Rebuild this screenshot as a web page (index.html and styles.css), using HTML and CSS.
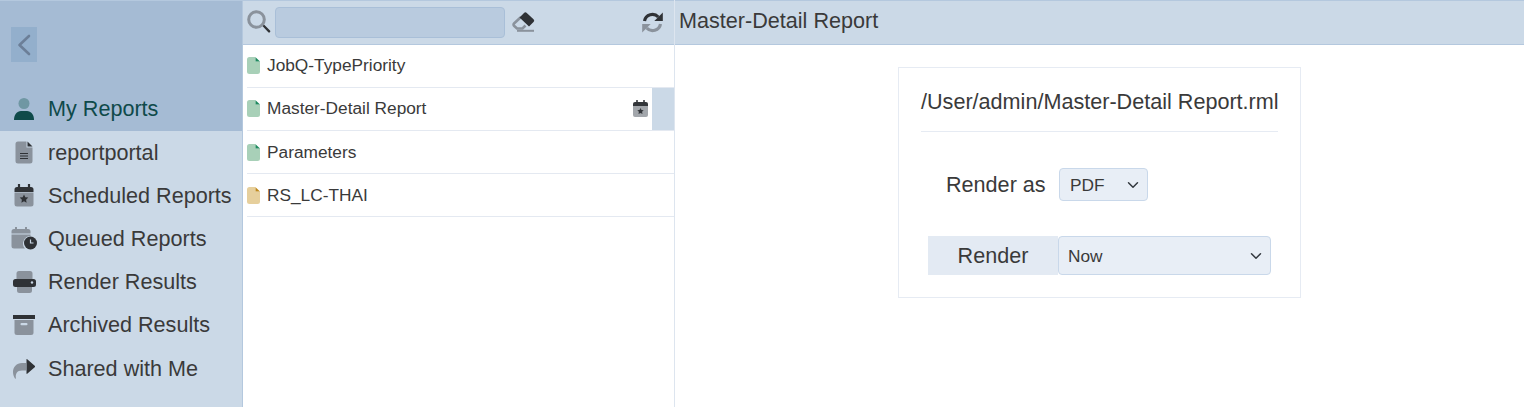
FILE: index.html
```html
<!DOCTYPE html>
<html lang="en">
<head>
<meta charset="utf-8">
<title>Master-Detail Report</title>
<link rel="stylesheet" href="styles.css">
</head>
<body>
<div class="app">
  <aside class="sidebar">
    <div class="side-top">
      <button class="collapse" type="button" aria-label="Collapse">
        <svg width="14" height="22" viewBox="0 0 14 22"><path d="M12 2 2.500 11l9.500 9" fill="none" stroke="#6c7f98" stroke-width="2.600" stroke-linecap="round" stroke-linejoin="round"/></svg>
      </button>
      <div class="side-item active">
        <span class="ico"><svg width="22" height="24" viewBox="0 0 22 24"><circle cx="11" cy="6.500" r="5.500" fill="#6f97a3"/><path d="M1 23c0-5.500 3-9 7-9h6c4 0 7 3.500 7 9z" fill="#0f4a4a"/></svg></span>
        <span>My Reports</span>
      </div>
    </div>
    <div class="side-item">
      <span class="ico"><svg width="18" height="23" viewBox="0 0 18 23"><path d="M3 .5h8.500V6.500h6V20a2.500 2.500 0 0 1-2.500 2.500H3A2.500 2.500 0 0 1 .5 20V3A2.500 2.500 0 0 1 3 .5z" fill="#8a929c"/><path d="M12.500.5l5 5h-5z" fill="#2f3236"/><path d="M5 12.500h8M5 15h8M5 17.500h8" stroke="#2f3236" stroke-width="1.100"/></svg></span>
      <span>reportportal</span>
    </div>
    <div class="side-item">
      <span class="ico"><svg width="20" height="23" viewBox="0 0 20 23"><path d="M.5 8.500h19V20a2.500 2.500 0 0 1-2.500 2.500H3A2.500 2.500 0 0 1 .5 20z" fill="#8a929c"/><path d="M3 3h14a2.500 2.500 0 0 1 2.500 2.500V8H.5V5.500A2.500 2.500 0 0 1 3 3z" fill="#2f3236"/><path d="M5 .5v4M15 .5v4" stroke="#2f3236" stroke-width="2.200" stroke-linecap="round"/><path d="m10 10.500 1.300 2.700 3 .4-2.200 2.100.5 3-2.600-1.400-2.600 1.400.5-3-2.200-2.100 3-.4z" fill="#2f3236"/></svg></span>
      <span>Scheduled Reports</span>
    </div>
    <div class="side-item">
      <span class="ico"><svg width="26" height="23" viewBox="0 0 26 23"><path d="M.5 7.500h19V9a7.500 7.500 0 0 0-5.500 12.500H3A2.500 2.500 0 0 1 .5 19z" fill="#8a929c"/><path d="M3 2h14a2.500 2.500 0 0 1 2.500 2.500V6.500H.5V4.500A2.500 2.500 0 0 1 3 2z" fill="#8a929c"/><path d="M5 .5v3M15 .5v3" stroke="#8a929c" stroke-width="2" stroke-linecap="round"/><circle cx="19.500" cy="16" r="6.500" fill="#2f3236"/><path d="M19.500 12.500V16h3" fill="none" stroke="#cbd9e7" stroke-width="1.200"/></svg></span>
      <span>Queued Reports</span>
    </div>
    <div class="side-item">
      <span class="ico"><svg width="23" height="22" viewBox="0 0 23 22"><path d="M6 0h11a2.500 2.500 0 0 1 2.500 2.500V8h-16V2.500A2.500 2.500 0 0 1 6 0zM4 15h15v4.500a2.500 2.500 0 0 1-2.500 2.500h-10A2.500 2.500 0 0 1 4 19.500z" fill="#8a929c"/><path d="M2.500 8h18A2.500 2.500 0 0 1 23 10.500v3a2.500 2.500 0 0 1-2.500 2.500h-18A2.500 2.500 0 0 1 0 13.500v-3A2.500 2.500 0 0 1 2.500 8z" fill="#2f3236"/><circle cx="19" cy="11.500" r="1.200" fill="#cbd9e7"/></svg></span>
      <span>Render Results</span>
    </div>
    <div class="side-item">
      <span class="ico"><svg width="22" height="20" viewBox="0 0 22 20"><rect x="0" y="0" width="22" height="4" fill="#2f3236"/><path d="M1.500 5h19v12.500A2.500 2.500 0 0 1 18 20H4a2.500 2.500 0 0 1-2.500-2.500z" fill="#8a929c"/><rect x="7.500" y="8" width="7" height="2.200" rx="1" fill="#cbd9e7"/></svg></span>
      <span>Archived Results</span>
    </div>
    <div class="side-item">
      <span class="ico"><svg width="22" height="20" viewBox="0 0 22 20"><path d="M13 4H9C3.500 4 0 8 0 13c0 3 1 5 2 6.500.5.500 1 .2.900-.4C2.300 15 3.800 11.500 9 11.500h4z" fill="#8a929c"/><path d="M13.500 .5c0-.4.400-.6.700-.3L22 7c.3.300.3.700 0 1l-7.800 6.800c-.3.300-.7.100-.7-.3z" fill="#2f3236"/></svg></span>
      <span>Shared with Me</span>
    </div>
  </aside>

  <section class="files">
    <div class="files-bar">
      <svg class="search-ico" width="24" height="24" viewBox="0 0 24 24"><path d="m14.500 15 1.500-1.500 7 7a1 1 0 0 1 0 1.500l-.2.200a1 1 0 0 1-1.500 0z" fill="#2f3236"/><circle cx="9.500" cy="9.500" r="7.800" fill="none" stroke="#8a929c" stroke-width="3"/></svg>
      <input class="search" type="text" aria-label="Search">
      <svg class="eraser" width="23" height="20" viewBox="0 0 23 20"><path d="M9 5 2 11.500a1.500 1.500 0 0 0 0 2.200L5 16.500h5.500l3-3" fill="none" stroke="#8a929c" stroke-width="2.600"/><path d="M7.500 5.500 12 1a2 2 0 0 1 2.800 0l6.700 6.200a2 2 0 0 1 0 2.800L17 14.500z" fill="#2f3236"/><path d="M5 18.800h17" stroke="#8a929c" stroke-width="2"/></svg>
      <svg class="refresh" width="21" height="21" viewBox="0 0 21 21"><path d="M2.500 9A8 8 0 0 1 16.300 5" fill="none" stroke="#2f3236" stroke-width="3.200"/><path d="M20.800 .5V9H12.300z" fill="#2f3236"/><path d="M18.500 12A8 8 0 0 1 4.700 16" fill="none" stroke="#8a929c" stroke-width="3.200"/><path d="M.2 20.500V12h8.500z" fill="#8a929c"/></svg>
    </div>
    <ul class="file-list">
      <li class="file-row"><svg class="doc" width="13" height="17" viewBox="0 0 13 17"><path d="M2.500 0H8.500V4.500H13V14.500a2.500 2.500 0 0 1-2.500 2.500h-8A2.500 2.500 0 0 1 0 14.500v-12A2.500 2.500 0 0 1 2.500 0z" fill="#a8d0b8"/><path d="M8.500 .2 13 4.500H8.500z" fill="#1f8a5f"/></svg><span>JobQ-TypePriority</span></li>
      <li class="file-row selected"><svg class="doc" width="13" height="17" viewBox="0 0 13 17"><path d="M2.500 0H8.500V4.500H13V14.500a2.500 2.500 0 0 1-2.500 2.500h-8A2.500 2.500 0 0 1 0 14.500v-12A2.500 2.500 0 0 1 2.500 0z" fill="#a8d0b8"/><path d="M8.500 .2 13 4.500H8.500z" fill="#1f8a5f"/></svg><span class="file-name">Master-Detail Report</span>
        <svg class="sched" width="15" height="17" viewBox="0 0 15 17"><path d="M0 6h15v9a2 2 0 0 1-2 2H2a2 2 0 0 1-2-2z" fill="#a2a6ab"/><path d="M2 2h11a2 2 0 0 1 2 2v2H0V4a2 2 0 0 1 2-2z" fill="#33363a"/><path d="M4 .5v3M11 .5v3" stroke="#33363a" stroke-width="1.600" stroke-linecap="round"/><path d="m7.500 8 1 2 2.200.3-1.600 1.500.4 2.200-2-1-2 1 .4-2.200-1.600-1.500 2.200-.3z" fill="#33363a"/></svg>
        <span class="row-tab"></span>
      </li>
      <li class="file-row"><svg class="doc" width="13" height="17" viewBox="0 0 13 17"><path d="M2.500 0H8.500V4.500H13V14.500a2.500 2.500 0 0 1-2.500 2.500h-8A2.500 2.500 0 0 1 0 14.500v-12A2.500 2.500 0 0 1 2.500 0z" fill="#a8d0b8"/><path d="M8.500 .2 13 4.500H8.500z" fill="#1f8a5f"/></svg><span>Parameters</span></li>
      <li class="file-row"><svg class="doc" width="13" height="17" viewBox="0 0 13 17"><path d="M2.500 0H8.500V4.500H13V14.500a2.500 2.500 0 0 1-2.500 2.500h-8A2.500 2.500 0 0 1 0 14.500v-12A2.500 2.500 0 0 1 2.500 0z" fill="#e6cf9c"/><path d="M8.500 .2 13 4.500H8.500z" fill="#c08a1e"/></svg><span>RS_LC-THAI</span></li>
    </ul>
  </section>

  <main class="detail">
    <header class="detail-bar">Master-Detail Report</header>
    <div class="detail-body">
      <div class="card">
        <h2 class="card-title">/User/admin/Master-Detail Report.rml</h2>
        <div class="format-row">
          <label class="format-label" for="fmt">Render as</label>
          <select id="fmt" class="pick pick-format"><option>PDF</option></select>
        </div>
        <div class="render-row">
          <span class="render-label">Render</span>
          <select class="pick pick-when" aria-label="When"><option>Now</option></select>
        </div>
      </div>
    </div>
  </main>
</div>
</body>
</html>
```
FILE: styles.css
```css
* { box-sizing: border-box; }
html, body { margin: 0; height: 100%; }
body {
  font-family: "Liberation Sans", Arial, sans-serif;
  color: #3a3a3a;
  background: #fff;
  overflow: hidden;
}
.app { display: flex; height: 407px; }

/* Sidebar */
.sidebar {
  width: 243px;
  flex: none;
  background: #cbd9e7;
  border-right: 1px solid #b4c8de;
  font-size: 21.6px;
}
.side-top {
  height: 131px;
  background: #a5bbd4;
  border-top: 1px solid #b4c8de;
  padding-top: 26px;
  display: flex;
  flex-direction: column;
}
.collapse {
  width: 26px;
  height: 35px;
  margin: 0 0 0 11px;
  padding: 0;
  border: 0;
  background: #93afcc;
  display: flex;
  align-items: center;
  justify-content: center;
}
.side-item {
  height: 43.2px;
  display: flex;
  align-items: center;
  flex: none;
}
.side-top .side-item { margin-top: auto; }
.side-item.active { color: #0f4a4a; }
.ico {
  width: 48px;
  flex: none;
  display: flex;
  justify-content: center;
}
.ico svg { display: block; }

/* File column */
.files {
  width: 432px;
  flex: none;
  border-right: 1px solid #dde5ef;
  display: flex;
  flex-direction: column;
}
.files-bar {
  height: 44.6px;
  flex: none;
  background: #cbd9e7;
  border-top: 1px solid #b4c8de;
  border-bottom: 1px solid #b4c8de;
  display: flex;
  align-items: center;
  padding-left: 4px;
}
.search-ico { flex: none; }
.search {
  width: 230px;
  height: 31px;
  margin-left: 4px;
  background: #b9cbdf;
  border: 1px solid #a9bfd8;
  border-radius: 4px;
}
.eraser { margin-left: 7px; flex: none; }
.refresh { margin-left: auto; margin-right: 11px; flex: none; }
.file-list {
  list-style: none;
  margin: 0 0 0 4px;
  padding: 0;
  font-size: 17.3px;
}
.file-row {
  height: 43.2px;
  display: flex;
  align-items: center;
  gap: 7px;
  border-bottom: 1px solid #e4e9f1;
  color: #3a3a3a;
}
.doc { flex: none; }
.file-name { flex: 1; }
.selected { position: relative; padding-right: 22px; }
.sched { flex: none; margin-right: 4px; }
.row-tab {
  width: 22px;
  height: 42px;
  background: #cbd9e7;
  position: absolute;
  right: 0;
  top: 0;
}

/* Detail */
.detail { flex: 1; display: flex; flex-direction: column; min-width: 0; }
.detail-bar {
  height: 45px;
  flex: none;
  background: #cbd9e7;
  border-top: 1px solid #b4c8de;
  border-bottom: 1px solid #b4c8de;
  font-size: 21.6px;
  display: flex;
  align-items: center;
  padding: 0 0 3px 4px;
}
.detail-body { display: flex; justify-content: center; padding-top: 22px; }
.card {
  width: 403px;
  height: 231px;
  border: 1px solid #e6ebf3;
  padding: 0 22px;
}
.card-title {
  font-weight: 400;
  font-size: 21.6px;
  margin: 0;
  height: 64px;
  padding-top: 21px;
  line-height: 26px;
  border-bottom: 1px solid #e6ebf3;
  white-space: nowrap;
}
.format-row {
  display: flex;
  align-items: center;
  margin-top: 36px;
  padding-left: 25px;
}
.format-label { font-size: 21.6px; width: 113px; }
.pick {
  appearance: none;
  font-family: inherit;
  color: #3a3a3a;
  font-size: 17.3px;
  background-color: #e8eef6;
  border: 1px solid #c9d8ea;
  border-radius: 4px;
  background-repeat: no-repeat;
  background-image: url("data:image/svg+xml,%3Csvg xmlns='http://www.w3.org/2000/svg' viewBox='0 0 16 16'%3E%3Cpath fill='none' stroke='%23343a40' stroke-linecap='round' stroke-linejoin='round' stroke-width='2' d='m2 5 6 6 6-6'/%3E%3C/svg%3E");
  background-size: 14px 12px;
  background-position: right 7px center;
}
.pick-format { width: 89px; height: 33px; padding: 0 0 0 10px; }
.render-row { display: flex; margin-top: 35px; margin-left: 7px; }
.render-label {
  width: 130px;
  height: 39px;
  background: #e3eaf3;
  font-size: 21.6px;
  display: flex;
  align-items: center;
  justify-content: center;
}
.pick-when { width: 213px; height: 39px; padding: 0 0 0 9px; }
```
